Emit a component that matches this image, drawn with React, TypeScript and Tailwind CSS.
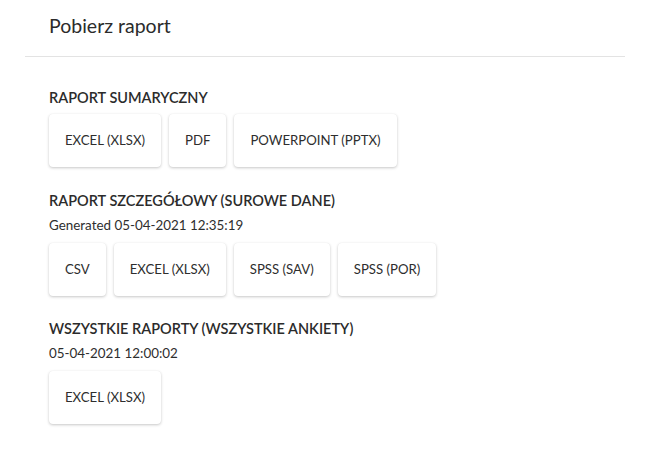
import React from "react";

function Btn({ label }: { label: string }) {
  return (
    <button className="h-[53px] px-4 rounded-[4px] bg-white text-[13.2px] text-[#2e2e2e] shadow-[0_1px_3px_rgba(0,0,0,0.22),0_0_1px_rgba(0,0,0,0.06)]">
      {label}
    </button>
  );
}

function Section({
  title,
  sub,
  buttons,
  className,
}: {
  title: string;
  sub?: string;
  buttons: string[];
  className?: string;
}) {
  return (
    <div className={"flex flex-col " + (className ?? "")}>
      <div className="h-5 leading-5 text-[14.5px] font-semibold text-[#2b2b2b]">{title}</div>
      {sub && <div className="mt-1 h-5 leading-5 text-[13.4px] text-[#2e2e2e]">{sub}</div>}
      <div className={"flex gap-2 " + (sub ? "mt-2" : "mt-1.5")}>
        {buttons.map((b) => (
          <Btn key={b} label={b} />
        ))}
      </div>
    </div>
  );
}

export default function App() {
  return (
    <div className="w-[650px] h-[450px] bg-white" style={{ fontFamily: "Lato, 'Noto Sans', sans-serif" }}>
      <div className="mx-[25px] w-[600px]">
        <div className="h-[57px] border-b border-[#e3e3e3] pl-6 flex items-center">
          <span className="text-[19.5px] text-[#2b2b2b] leading-6 -mt-[5px]">Pobierz raport</span>
        </div>
        <div className="pl-6 pt-[31px]">
          <Section title="RAPORT SUMARYCZNY" buttons={["EXCEL (XLSX)", "PDF", "POWERPOINT (PPTX)"]} />
          <Section
            className="mt-[24px]"
            title="RAPORT SZCZEGÓŁOWY (SUROWE DANE)"
            sub="Generated 05-04-2021 12:35:19"
            buttons={["CSV", "EXCEL (XLSX)", "SPSS (SAV)", "SPSS (POR)"]}
          />
          <Section
            className="mt-[23px]"
            title="WSZYSTKIE RAPORTY (WSZYSTKIE ANKIETY)"
            sub="05-04-2021 12:00:02"
            buttons={["EXCEL (XLSX)"]}
          />
        </div>
      </div>
    </div>
  );
}
